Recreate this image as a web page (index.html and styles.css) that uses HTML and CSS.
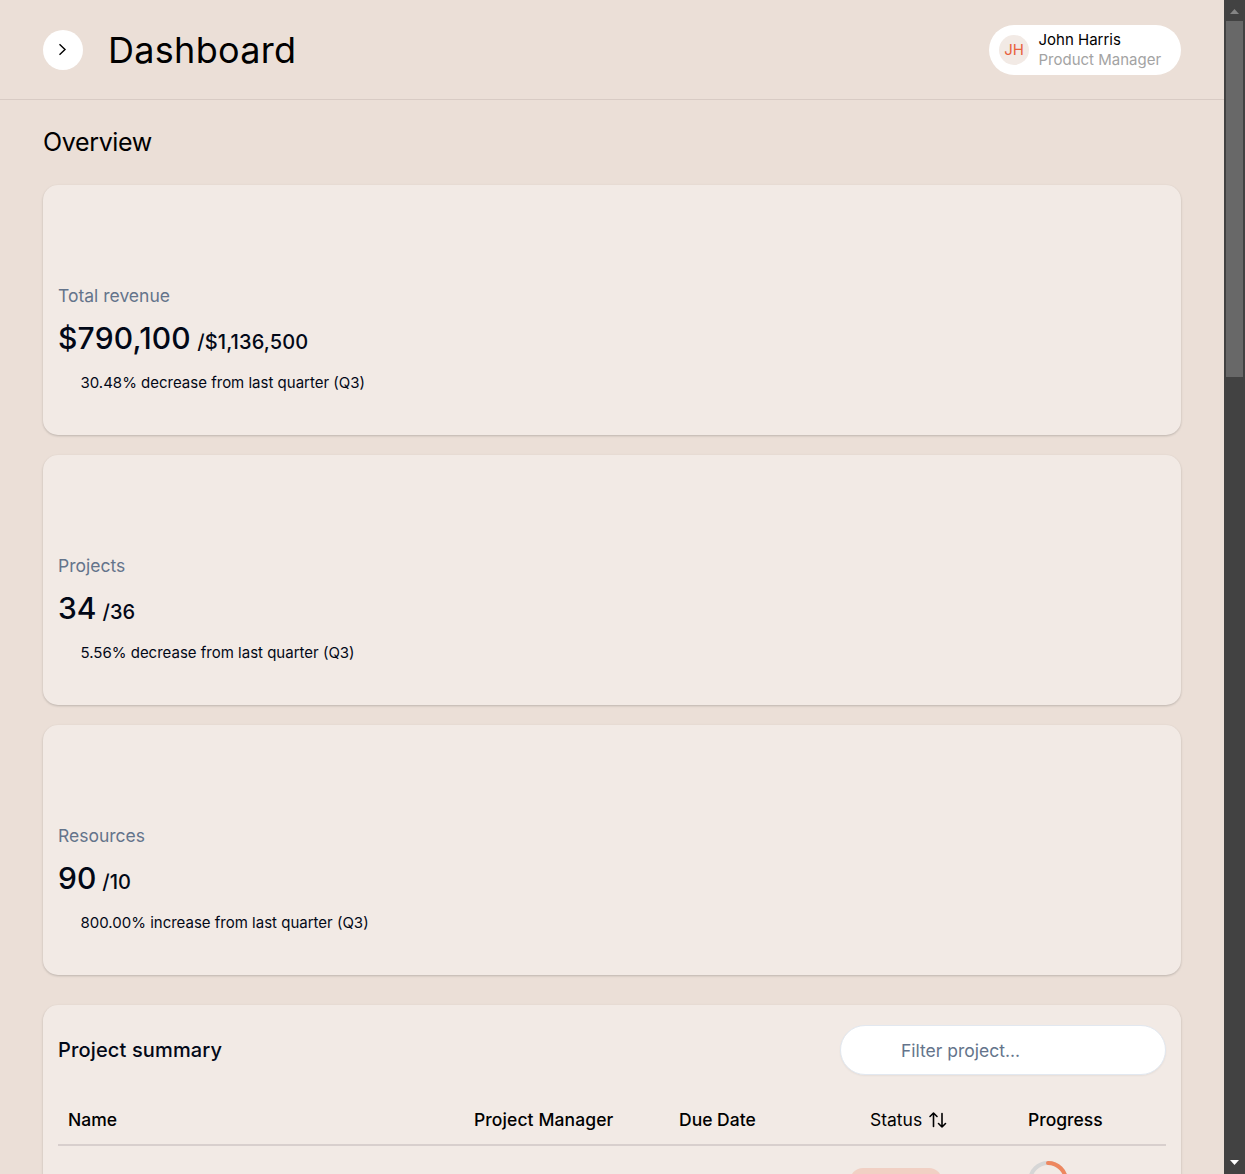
FILE: index.html
```html
<!DOCTYPE html>
<html lang="en">
<head>
<meta charset="utf-8">
<title>Dashboard</title>
<link rel="stylesheet" href="styles.css">
</head>
<body>
<div class="app">
  <div class="page">
    <header class="header">
      <button class="menu-toggle" aria-label="Open menu">
        <svg width="20" height="20" viewBox="0 0 20 20" fill="none" stroke="#000" stroke-width="1.4"><path d="M6.5 4.3 12 9.5 6.5 14.7"/></svg>
      </button>
      <h1 class="title">Dashboard</h1>
      <div class="user">
        <span class="avatar">JH</span>
        <div class="user-text">
          <span class="user-name">John Harris</span>
          <span class="user-role">Product Manager</span>
        </div>
      </div>
    </header>
    <main class="content">
      <h2 class="overview">Overview</h2>
      <div class="stats">
        <section class="card stat">
          <p class="stat-label">Total revenue</p>
          <p class="stat-value stat-money">$790,100 <span class="stat-total">/$1,136,500</span></p>
          <p class="stat-note">30.48% decrease from last quarter (Q3)</p>
        </section>
        <section class="card stat">
          <p class="stat-label">Projects</p>
          <p class="stat-value">34 <span class="stat-total">/36</span></p>
          <p class="stat-note">5.56% decrease from last quarter (Q3)</p>
        </section>
        <section class="card stat">
          <p class="stat-label">Resources</p>
          <p class="stat-value">90 <span class="stat-total">/10</span></p>
          <p class="stat-note">800.00% increase from last quarter (Q3)</p>
        </section>
      </div>
      <section class="card summary">
        <div class="summary-head">
          <h3 class="summary-title">Project summary</h3>
          <input class="filter" type="text" placeholder="Filter project...">
        </div>
        <div class="row row-head">
          <span>Name</span>
          <span class="manager">Project Manager</span>
          <span>Due Date</span>
          <span class="sort">Status
            <svg width="20" height="20" viewBox="0 0 20 20" fill="none" stroke="#000" stroke-width="1.6" stroke-linecap="round" stroke-linejoin="round"><path d="M3 6.5 6.5 3 10 6.5M6.5 3V16.5M11.5 13.5 15 17 18.5 13.5M15 17V3.5"/></svg>
          </span>
          <span>Progress</span>
        </div>
        <div class="row">
          <span></span>
          <span></span>
          <span></span>
          <span class="pill"></span>
          <svg class="ring" width="40" height="40" viewBox="0 0 40 40" fill="none" stroke-width="4"><circle cx="20" cy="20" r="18" stroke="#d6d6d6"/><path d="M20 2A18 18 0 0 1 38 20" stroke="#ee875f" stroke-linecap="round"/></svg>
        </div>
      </section>
    </main>
  </div>
  <div class="scrollbar">
    <svg class="arrow" width="21" height="21" viewBox="0 0 21 21"><path d="M6 14 10.5 9 15 14Z" fill="#858585"/></svg>
    <div class="thumb"></div>
    <svg class="arrow arrow-down" width="21" height="21" viewBox="0 0 21 21"><path d="M6 7 10.5 12 15 7Z" fill="#fff"/></svg>
  </div>
</div>
</body>
</html>
```
FILE: styles.css
```css
* {
  box-sizing: border-box;
}

body {
  margin: 0;
  font-family: Inter, "Liberation Sans", sans-serif;
  color: #020817;
  background: #ebdfd7;
  overflow: hidden;
}

h1, h2, h3, p {
  margin: 0;
  font-weight: 400;
}

.app {
  display: flex;
  height: 1174px;
  overflow: hidden;
}

.page {
  width: 1224px;
}

.header {
  display: flex;
  align-items: center;
  height: 100px;
  padding: 0 43px;
  border-bottom: 1px solid #d8cbc4;
}

.menu-toggle {
  display: flex;
  align-items: center;
  justify-content: center;
  width: 40px;
  height: 40px;
  padding: 0;
  border: 0;
  border-radius: 50%;
  background: #fff;
}

.title {
  margin-left: 25px;
  padding-top: 1px;
  font-size: 36px;
  line-height: 45px;
  letter-spacing: 0.3px;
  color: #000;
}

.user {
  display: flex;
  align-items: center;
  gap: 9.5px;
  width: 192px;
  height: 50px;
  margin-left: auto;
  padding-left: 10px;
  border-radius: 25px;
  background: #fff;
}

.avatar {
  width: 30px;
  border-radius: 50%;
  background: #f2eae5;
  color: #e8613c;
  font-size: 15px;
  line-height: 30px;
  text-align: center;
}

.user-text {
  display: flex;
  flex-direction: column;
  font-size: 15px;
  line-height: 20px;
  white-space: nowrap;
}

.user-name {
  color: #000;
}

.user-role {
  color: #a3a3a3;
}

.content {
  padding: 25px 43px 0;
}

.overview {
  font-size: 25px;
  line-height: 35px;
  letter-spacing: -0.35px;
  color: #000;
}

.stats {
  display: grid;
  gap: 20px;
  margin: 25px 0 30px;
}

.card {
  border-radius: 15px;
  background: #f2eae5;
  box-shadow: 0 1px 3px rgba(0, 0, 0, 0.1), 0 1px 2px rgba(0, 0, 0, 0.1);
}

.stat {
  height: 250px;
  padding: 98px 15px 0;
}

.stat-label {
  font-size: 17.5px;
  line-height: 25px;
  color: #64748b;
}

.stat-value {
  margin-top: 10px;
  font-size: 30px;
  font-weight: 500;
  line-height: 40px;
}

.stat-money {
  letter-spacing: 0.2px;
}

.stat-total {
  margin-left: -2px;
  font-size: 20px;
}

.stat-money .stat-total {
  letter-spacing: 0.13px;
}

.stat-note {
  margin: 11px 0 0 22.5px;
  font-size: 15px;
  line-height: 20px;
}

.summary {
  height: 400px;
  padding: 20px 15px;
}

.summary-head {
  display: flex;
  align-items: center;
  justify-content: space-between;
  height: 50px;
}

.summary-title {
  font-size: 20px;
  font-weight: 500;
  letter-spacing: 0.15px;
}

.filter {
  width: 326px;
  height: 50px;
  padding: 0 60px;
  border: 1px solid #e2e8f0;
  border-radius: 25px;
  background: #fff;
  box-shadow: 0 1px 2px rgba(0, 0, 0, 0.05);
  font: 17.5px Inter, sans-serif;
}

.filter::placeholder {
  color: #64748b;
}

.row {
  display: grid;
  grid-template-columns: 406px 205px 191px 158px 1fr;
  padding-left: 10px;
}

.row-head {
  align-items: center;
  height: 51px;
  margin-top: 20px;
  border-bottom: 2px solid #d8cfcd;
  font-size: 17.5px;
  font-weight: 500;
  color: #000;
}

.manager {
  letter-spacing: 0.1px;
}

.sort {
  display: flex;
  align-items: center;
  gap: 5px;
  font-weight: 400;
}

.pill {
  width: 92px;
  height: 26px;
  margin: 22px 0 0 -20px;
  border-radius: 13px;
  background: #f1d0c4;
}

.ring {
  margin-top: 15px;
}

.scrollbar {
  display: flex;
  flex-direction: column;
  width: 21px;
  background: #424242;
}

.thumb {
  width: 17px;
  height: 356px;
  margin-left: 2px;
  background: #686868;
}

.arrow-down {
  margin-top: auto;
}
```
